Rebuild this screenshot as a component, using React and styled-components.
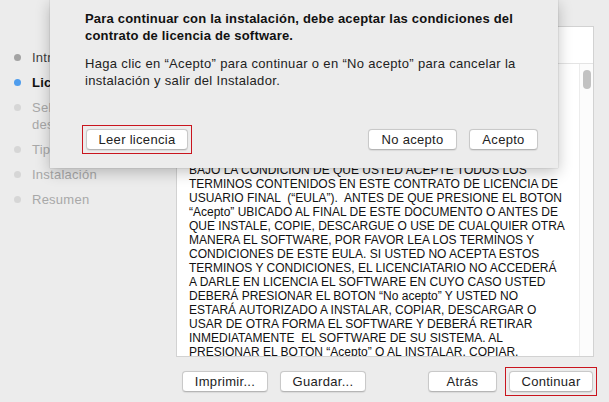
import React from "react";
import styled, { createGlobalStyle } from "styled-components";

const GlobalStyle = createGlobalStyle`
  html, body {
    margin: 0;
    padding: 0;
    background: #ececec;
  }
  body {
    font-family: "Liberation Sans", Arial, sans-serif;
    -webkit-font-smoothing: antialiased;
  }
`;

const steps = [
  { label: "Introducción", state: "done" },
  { label: "Licencia", state: "current" },
  { label: "Selección de destino", state: "todo", wrap: true },
  { label: "Tipo de instalación", state: "todo" },
  { label: "Instalación", state: "todo" },
  { label: "Resumen", state: "todo" },
];

// lines scrolled under the sheet, still part of the license text
const hiddenLines = [
  "CONTRATO DE LICENCIA DE USUARIO FINAL DEL SOFTWARE",
  "IMPORTANTE - LEA ATENTAMENTE: ESTE CONTRATO ES",
  "VINCULANTE. EL SOFTWARE SE LE OTORGA EN LICENCIA,",
  "NO SE VENDE, Y SOLO PUEDE UTILIZARSE DE ACUERDO",
  "CON LOS TERMINOS DEL PRESENTE (EL \u201CSOFTWARE\u201D)",
  "DE ACUERDO CON LOS TERMINOS DEL PRESENTE (EL \u201CEULA\u201D)",
  "EL FABRICANTE LE OTORGA LA LICENCIA DEL SOFTWARE",
];

const licenseLines = [
  "BAJO LA CONDICI\u00d3N DE QUE USTED ACEPTE TODOS LOS",
  "TERMINOS CONTENIDOS EN ESTE CONTRATO DE LICENCIA DE",
  "USUARIO FINAL  (\u201CEULA\u201D).  ANTES DE QUE PRESIONE EL BOTON",
  "\u201CAcepto\u201D UBICADO AL FINAL DE ESTE DOCUMENTO O ANTES DE",
  "QUE INSTALE, COPIE, DESCARGUE O USE DE CUALQUIER OTRA",
  "MANERA EL SOFTWARE, POR FAVOR LEA LOS TERMINOS Y",
  "CONDICIONES DE ESTE EULA. SI USTED NO ACEPTA ESTOS",
  "TERMINOS Y CONDICIONES, EL LICENCIATARIO NO ACCEDER\u00c1",
  "A DARLE EN LICENCIA EL SOFTWARE EN CUYO CASO USTED",
  "DEBER\u00c1 PRESIONAR EL BOTON \u201CNo acepto\u201D Y USTED NO",
  "ESTAR\u00c1 AUTORIZADO A INSTALAR, COPIAR, DESCARGAR O",
  "USAR DE OTRA FORMA EL SOFTWARE Y DEBER\u00c1 RETIRAR",
  "INMEDIATAMENTE  EL SOFTWARE DE SU SISTEMA. AL",
  "PRESIONAR EL BOTON \u201CAcepto\u201D O AL INSTALAR, COPIAR,",
];

function App() {
  return (
    <>
      <GlobalStyle />
      <Window>
        <Body>
          <Sidebar>
            {steps.map((s) => (
              <Step key={s.label} $state={s.state}>
                <Dot $state={s.state} />
                <StepLabel $state={s.state} $wrap={s.wrap}>
                  {s.label}
                </StepLabel>
              </Step>
            ))}
          </Sidebar>
          <LicenseBox>
            <BoxHeader />
            <BoxBody>
              <LicenseText>
                {hiddenLines.concat(licenseLines).map((l, i) => (
                  <Line key={i}>{l}</Line>
                ))}
              </LicenseText>
              <ScrollTrack>
                <ScrollThumb />
              </ScrollTrack>
            </BoxBody>
          </LicenseBox>
        </Body>
        <Footer>
          <Group>
            <Button $w={86}>Imprimir...</Button>
            <Button $w={86}>Guardar...</Button>
          </Group>
          <Group>
            <Button $w={69}>Atrás</Button>
            <Highlight>
              <Button $w={84}>Continuar</Button>
            </Highlight>
          </Group>
        </Footer>

        <Sheet>
          <SheetTitle>
            Para continuar con la instalación, debe aceptar las condiciones del
            contrato de licencia de software.
          </SheetTitle>
          <SheetText>
            Haga clic en “Acepto” para continuar o en “No acepto” para cancelar
            la instalación y salir del Instalador.
          </SheetText>
          <SheetButtons>
            <Highlight>
              <Button $w={102}>Leer licencia</Button>
            </Highlight>
            <Group>
              <Button $w={89}>No acepto</Button>
              <Button $w={69}>Acepto</Button>
            </Group>
          </SheetButtons>
        </Sheet>
      </Window>
    </>
  );
}

const Window = styled.div`
  position: relative;
  width: 609px;
  height: 402px;
  overflow: hidden;
  background: #ececec;
  display: flex;
  flex-direction: column;
`;

const Body = styled.div`
  display: flex;
  padding-top: 26px;
  height: 331px;
`;

const Sidebar = styled.div`
  width: 176px;
  flex-shrink: 0;
  display: flex;
  flex-direction: column;
  gap: 8px;
  padding-top: 23px;
  box-sizing: border-box;
`;

const Step = styled.div`
  display: flex;
  align-items: flex-start;
  padding-left: 14px;
`;

const dotColors = {
  done: "#a3a3a3",
  current: "#4f9ded",
  todo: "#d6d6d6",
};

const Dot = styled.span`
  width: 7px;
  height: 7px;
  border-radius: 50%;
  margin-top: 5px;
  margin-right: 11px;
  flex-shrink: 0;
  background: ${(p) => dotColors[p.$state]};
`;

const StepLabel = styled.span`
  font-size: 13px;
  line-height: 17px;
  letter-spacing: 0.25px;
  width: ${(p) => (p.$wrap ? "90px" : "auto")};
  white-space: ${(p) => (p.$wrap ? "normal" : "nowrap")};
  font-weight: ${(p) => (p.$state === "current" ? "bold" : "normal")};
  color: ${(p) =>
    p.$state === "current" ? "#111" : p.$state === "done" ? "#3c3c3c" : "#a8a8a8"};
`;

const LicenseBox = styled.div`
  width: 418px;
  height: 331px;
  box-sizing: border-box;
  background: #fff;
  border: 1px solid #d2d2d2;
  display: flex;
  flex-direction: column;
`;

const BoxHeader = styled.div`
  height: 36px;
  flex-shrink: 0;
  border-bottom: 1px solid #e4e4e4;
`;

const BoxBody = styled.div`
  flex: 1;
  display: flex;
  min-height: 0;
`;

const LicenseText = styled.div`
  flex: 1;
  overflow: hidden;
  padding: 1px 0 0 12px;
  font-size: 12px;
  line-height: 14px;
  color: #111;
`;

const Line = styled.div`
  white-space: pre;
`;

const ScrollTrack = styled.div`
  width: 14px;
  flex-shrink: 0;
  border-left: 1px solid #ececec;
  background: #fcfcfc;
  padding-top: 6px;
  box-sizing: border-box;
  display: flex;
  justify-content: center;
`;

const ScrollThumb = styled.div`
  width: 8px;
  height: 19px;
  border-radius: 4px;
  background: #c2c2c2;
`;

const Footer = styled.div`
  display: flex;
  justify-content: space-between;
  padding: 14px 16px 0 182px;
`;

const Group = styled.div`
  display: flex;
  gap: 12px;
  align-items: center;
`;

const Button = styled.div`
  width: ${(p) => p.$w}px;
  height: 21px;
  box-sizing: border-box;
  background: #fff;
  border: 1px solid #c9c9c9;
  border-bottom-color: #b5b5b5;
  border-radius: 4px;
  font-size: 13px;
  line-height: 19px;
  letter-spacing: 0.3px;
  color: #222;
  text-align: center;
  white-space: nowrap;
  box-shadow: 0 0.5px 1px rgba(0, 0, 0, 0.08);
`;

const Highlight = styled.div`
  margin: -4px;
  padding: 3px;
  border: 1px solid #c9151e;
`;

const Sheet = styled.div`
  position: absolute;
  left: 50px;
  top: 0;
  width: 508px;
  height: 168px;
  box-sizing: border-box;
  padding: 10px 20px 0 35px;
  background: #ececec;
  box-shadow: 0 4px 14px rgba(0, 0, 0, 0.24), 0 0 1px rgba(0, 0, 0, 0.3);
  display: flex;
  flex-direction: column;
`;

const SheetTitle = styled.div`
  font-size: 13px;
  line-height: 17px;
  letter-spacing: 0.2px;
  font-weight: bold;
  color: #111;
`;

const SheetText = styled.div`
  margin-top: 11px;
  font-size: 13px;
  line-height: 17px;
  letter-spacing: 0.33px;
  color: #222;
`;

const SheetButtons = styled.div`
  margin-top: auto;
  margin-bottom: 18px;
  padding-left: 1px;
  display: flex;
  justify-content: space-between;
  align-items: center;
`;

export default App;
